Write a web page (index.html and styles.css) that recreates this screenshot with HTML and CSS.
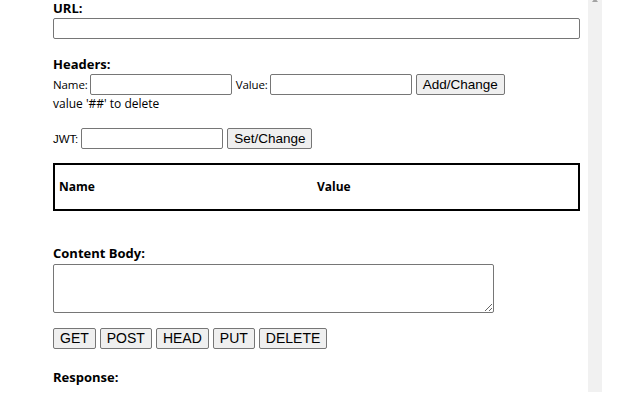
FILE: index.html
```html
<!DOCTYPE html>
<html>
<head>
<meta charset="utf-8">
<link rel="stylesheet" href="styles.css">
</head>
<body>
<div class="page">
  <main class="content">
    <h3 class="head head-url">URL:</h3>
    <input class="field url" type="text">

    <h3 class="head head-headers">Headers:</h3>
    <div class="row">
      <label class="lbl">Name:</label>
      <input class="field small" type="text">
      <label class="lbl">Value:</label>
      <input class="field small" type="text">
      <button class="btn btn-compact">Add/Change</button>
    </div>
    <p class="note">value '##' to delete</p>

    <div class="row jwt">
      <label class="lbl lbl-jwt">JWT:</label>
      <input class="field small" type="text">
      <button class="btn btn-compact">Set/Change</button>
    </div>

    <div class="table">
      <div class="th">Name</div>
      <div class="th">Value</div>
    </div>

    <h3 class="head head-body">Content Body:</h3>
    <textarea class="body-area"></textarea>

    <div class="methods">
      <button class="btn">GET</button>
      <button class="btn">POST</button>
      <button class="btn">HEAD</button>
      <button class="btn">PUT</button>
      <button class="btn">DELETE</button>
    </div>

    <h3 class="head head-resp">Response:</h3>
  </main>
  <div class="scrollbar"><span class="arrow"></span></div>
</div>
</body>
</html>
```

FILE: styles.css
```css
* { box-sizing: border-box; }
html, body { margin: 0; padding: 0; background: #fff; }
body {
  width: 640px;
  height: 400px;
  overflow: hidden;
  font-family: "Open Sans", "Noto Sans", sans-serif;
  color: #000;
}
.page {
  display: flex;
  align-items: flex-start;
  height: 400px;
}
.content {
  width: 527px;
  margin-left: 53px;
  display: flex;
  flex-direction: column;
  align-items: flex-start;
}
.head {
  margin: 0;
  font-size: 13px;
  font-weight: 700;
  line-height: 16px;
}
.head-url { margin-top: 0; }
.head-headers { margin-top: 17px; }
.head-body { margin-top: 34px; }
.head-resp { margin-top: 20px; }

.field {
  height: 21px;
  border: 1px solid #767676;
  border-radius: 2px;
  background: #fff;
  padding: 0 2px;
  margin: 0;
  font: 13px "Liberation Sans", sans-serif;
}
.url { width: 527px; margin-top: 2px; }
.small { width: 142px; }

.row {
  display: flex;
  align-items: center;
  gap: 4px;
  margin-top: 2px;
}
.row.jwt { margin-top: 16px; }
.lbl {
  font-size: 11.5px;
  line-height: 16px;
  margin-right: -2px;
  letter-spacing: -0.1px;
  color: #000;
}
.lbl-jwt { font-family: "Liberation Sans", sans-serif; font-size: 11.5px; margin-right: -1px; }
.note {
  margin: 1px 0 0;
  font-size: 12px;
  line-height: 16px;
}

.btn {
  height: 21px;
  padding: 0 6px;
  border: 1px solid #767676;
  border-radius: 2px;
  background: #efefef;
  color: #000;
  font: 14px "Liberation Sans", Arial, sans-serif;
  line-height: 19px;
  margin: 0;
}
.btn-compact { font-size: 13.5px; }

.table {
  width: 527px;
  height: 48px;
  margin-top: 14px;
  border: 2px solid #000;
  display: grid;
  grid-template-columns: 258px 1fr;
  align-items: center;
  padding: 0 4px;
}
.th {
  font-size: 12px;
  font-weight: 700;
  line-height: 16px;
}

.body-area {
  width: 441px;
  height: 49px;
  margin-top: 3px;
  border: 1px solid #767676;
  border-radius: 2px;
  resize: both;
  font: 13px "Liberation Mono", monospace;
}

.methods {
  display: flex;
  gap: 4px;
  margin-top: 15px;
}

.scrollbar {
  width: 14px;
  height: 392px;
  margin-left: 8px;
  background: #f1f1f1;
  position: relative;
}
.arrow {
  position: absolute;
  left: 4px;
  top: -2px;
  width: 0;
  height: 0;
  border-left: 3px solid transparent;
  border-right: 3px solid transparent;
  border-bottom: 4px solid #a3a3a3;
}
```
